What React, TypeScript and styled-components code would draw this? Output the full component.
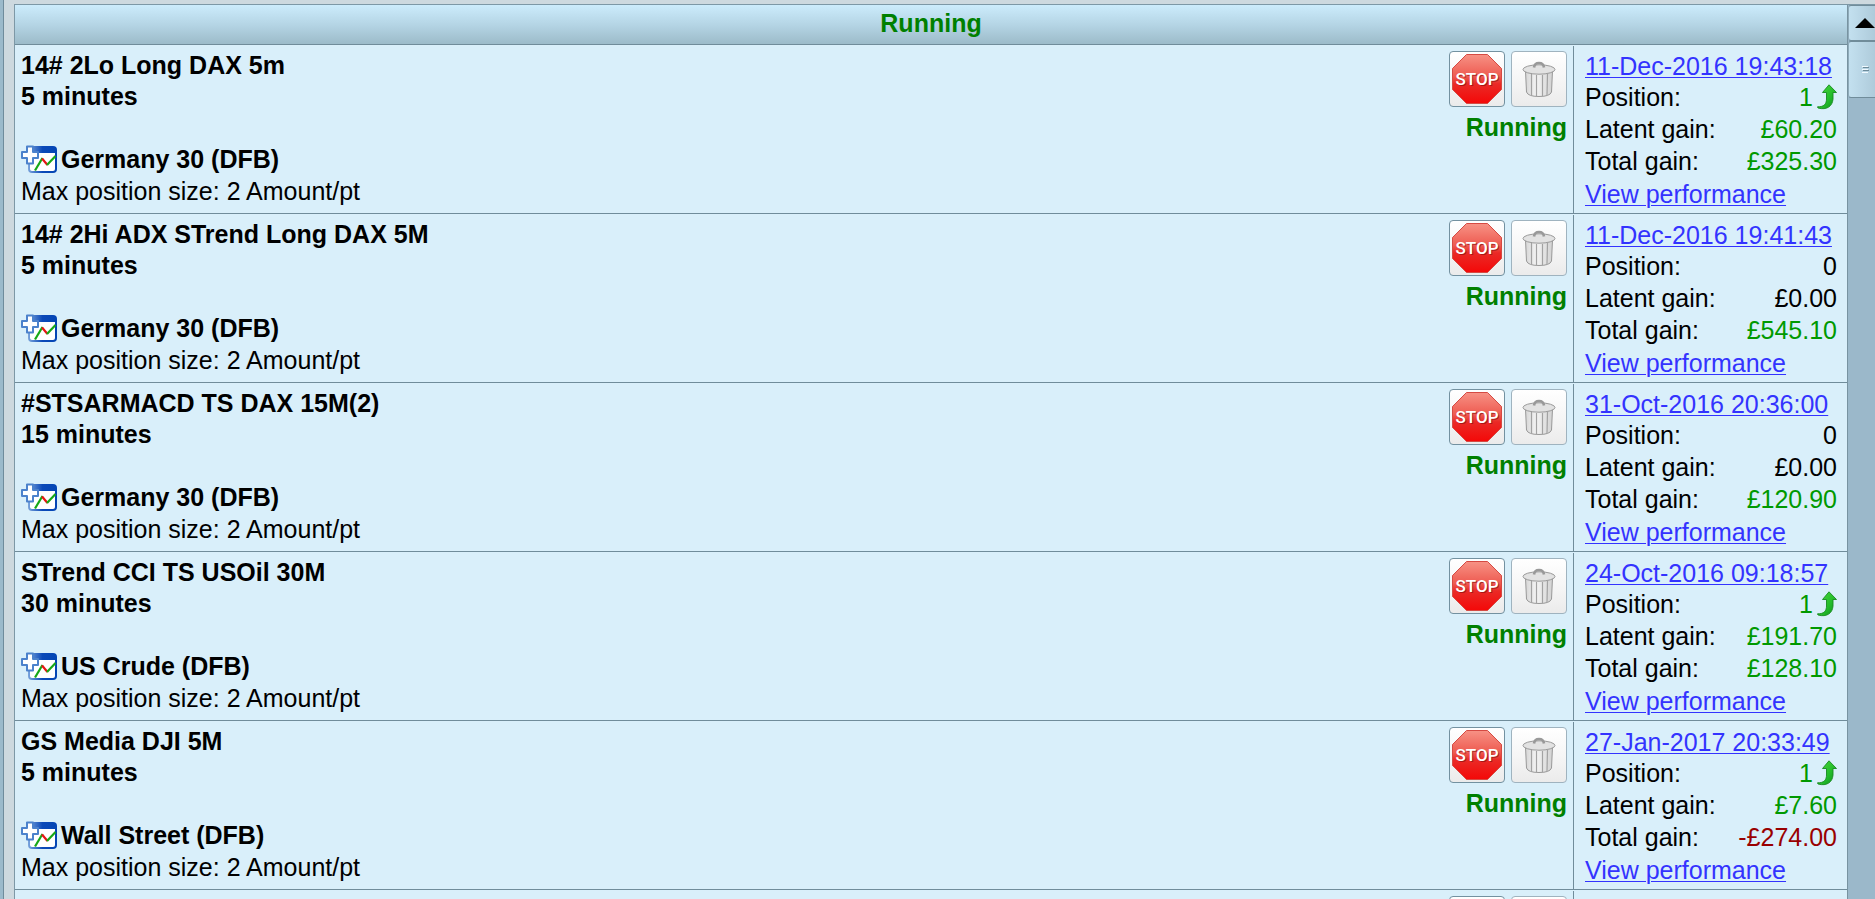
import React from "react";
import styled, { createGlobalStyle } from "styled-components";

type Tone = "plain" | "gain" | "loss";

interface System {
  name: string;
  timeframe: string;
  market: string;
  started: string;
  position: number;
  latent: string;
  latentTone: Tone;
  total: string;
  totalTone: Tone;
}

const systems: System[] = [
  { name: "14# 2Lo Long DAX 5m", timeframe: "5 minutes", market: "Germany 30 (DFB)", started: "11-Dec-2016 19:43:18", position: 1, latent: "£60.20", latentTone: "gain", total: "£325.30", totalTone: "gain" },
  { name: "14# 2Hi ADX STrend Long DAX 5M", timeframe: "5 minutes", market: "Germany 30 (DFB)", started: "11-Dec-2016 19:41:43", position: 0, latent: "£0.00", latentTone: "plain", total: "£545.10", totalTone: "gain" },
  { name: "#STSARMACD TS DAX 15M(2)", timeframe: "15 minutes", market: "Germany 30 (DFB)", started: "31-Oct-2016 20:36:00", position: 0, latent: "£0.00", latentTone: "plain", total: "£120.90", totalTone: "gain" },
  { name: "STrend CCI TS USOil 30M", timeframe: "30 minutes", market: "US Crude (DFB)", started: "24-Oct-2016 09:18:57", position: 1, latent: "£191.70", latentTone: "gain", total: "£128.10", totalTone: "gain" },
  { name: "GS Media DJI 5M", timeframe: "5 minutes", market: "Wall Street (DFB)", started: "27-Jan-2017 20:33:49", position: 1, latent: "£7.60", latentTone: "gain", total: "-£274.00", totalTone: "loss" },
];

const toneColor: Record<Tone, string> = { plain: "#000000", gain: "#009900", loss: "#990000" };

const GlobalStyle = createGlobalStyle`
  * { box-sizing: border-box; }
  body {
    margin: 0;
    overflow: hidden;
    background: #cdd9df;
    color: #000;
    font-family: "Liberation Sans", Arial, sans-serif;
    font-size: 25px;
    line-height: 32px;
  }
`;

const Window = styled.div`
  display: flex;
  height: 100vh;
  overflow: hidden;
`;

const WindowEdge = styled.div`
  flex: none;
  width: 4px;
  background: #9bbacb;
  border-right: 1px solid #6f8c9c;
`;

const Panel = styled.main`
  flex: 1;
  min-width: 0;
  margin: 4px 0 0 10px;
  border-top: 1px solid #7d98a6;
  border-left: 1px solid #7d98a6;
  background: #d9effa;
`;

const SystemTable = styled.table`
  width: 100%;
  border-collapse: separate;
  border-spacing: 0;
`;

const StatusHeading = styled.th`
  height: 40px;
  padding: 0 0 4px;
  border-bottom: 1px solid #708c9a;
  background: linear-gradient(#ccecfc, #b5d5e5 50%, #9cbbc9);
  color: #008000;
  font-weight: bold;
`;

const Cell = styled.td<{ $narrow?: boolean }>`
  height: 169px;
  padding: 0;
  vertical-align: top;
  border-bottom: 1px solid #708c9a;
  ${(p) => (p.$narrow ? "width: 274px;" : "")}
`;

const Strategy = styled.div`
  display: flex;
  justify-content: space-between;
  padding: 5px 6px 0;
`;

const Summary = styled.div`
  display: flex;
  flex-direction: column;
  gap: 31px;
`;

const Title = styled.div`
  font-weight: bold;
  line-height: 31px;
`;

const Market = styled.div`
  display: flex;
  align-items: center;
  gap: 4px;
  font-weight: bold;
`;

const Controls = styled.div`
  display: flex;
  flex-direction: column;
  align-items: flex-end;
  gap: 4px;
  padding-top: 1px;
`;

const ButtonRow = styled.div`
  display: flex;
  gap: 6px;
`;

const IconButton = styled.button<{ $muted?: boolean }>`
  display: flex;
  align-items: center;
  justify-content: center;
  width: 56px;
  height: 56px;
  padding: 0;
  border: 1px solid ${(p) => (p.$muted ? "#9fb3bf" : "#7391a0")};
  border-radius: 4px;
  background: linear-gradient(#ffffff, #f4f4f4 60%, #ebebeb);
`;

const RunState = styled.div`
  color: #008000;
  font-weight: bold;
`;

const Results = styled.div`
  height: 167px;
  margin-top: 1px;
  padding: 5px 10px 0 11px;
  border-left: 1px solid #708c9a;
`;

const Line = styled.div`
  display: flex;
  justify-content: space-between;
  white-space: nowrap;
`;

const LinkLine = styled(Line)`
  line-height: 30px;
  &:last-child { line-height: 34px; }
`;

const Link = styled.a`
  color: #3333ff;
  text-decoration: underline;
  text-decoration-thickness: 1px;
  text-underline-offset: 2px;
`;

const Amount = styled.span<{ $tone: Tone }>`
  display: flex;
  align-items: center;
  gap: 4px;
  color: ${(p) => toneColor[p.$tone]};
`;

const ScrollTrack = styled.div`
  flex: none;
  width: 28px;
  margin-top: 4px;
  overflow: hidden;
  border-left: 1px solid #7893a1;
  border-top: 1px solid #7d98a6;
  background: #9bb8ca;
`;

const ScrollPart = styled.button<{ $tall?: boolean }>`
  display: flex;
  align-items: center;
  justify-content: center;
  width: 34px;
  height: ${(p) => (p.$tall ? "57px" : "36px")};
  padding: 0;
  border: 1px solid #708c9a;
  border-left-color: #8fabba;
  border-radius: 3px;
  background: linear-gradient(90deg, #c3e0ef, #a9c6d6);
`;

const StopIcon = () => (
  <svg width="52" height="52" viewBox="0 0 52 52" aria-hidden="true">
    <defs>
      <linearGradient id="stopFill" x1="0" y1="0" x2="0" y2="1">
        <stop offset="0" stopColor="#f79285" />
        <stop offset="0.45" stopColor="#ee5a50" />
        <stop offset="0.6" stopColor="#ea2a26" />
        <stop offset="1" stopColor="#f40808" />
      </linearGradient>
    </defs>
    <path d="M15.500 1.500H36.500L50.500 15.500V36.500L36.500 50.500H15.500L1.500 36.500V15.500Z" fill="url(#stopFill)" stroke="#d54a43" />
    <text x="27" y="33" textAnchor="middle" fontFamily="Roboto, sans-serif" fontWeight="500" fontSize="17" fill="#8e1010" opacity="0.7">STOP</text>
    <text x="26" y="32" textAnchor="middle" fontFamily="Roboto, sans-serif" fontWeight="500" fontSize="17" fill="#fff">STOP</text>
  </svg>
);

const TrashIcon = () => (
  <svg width="34" height="38" viewBox="0 0 34 38" aria-hidden="true">
    <defs>
      <linearGradient id="binFill">
        <stop offset="0" stopColor="#d6d6d6" />
        <stop offset="0.4" stopColor="#f4f4f4" />
        <stop offset="1" stopColor="#d2d2d2" />
      </linearGradient>
    </defs>
    <path d="M3.500 11L4.500 32Q6 36.500 17 36.500T29.500 32L30.500 11Z" fill="url(#binFill)" stroke="#999" />
    <path d="M9.500 14V35M14.500 15V36M20.500 15V36M25.500 14L25 35" stroke="#a2a2a2" strokeWidth="1.200" fill="none" />
    <ellipse cx="17" cy="9.500" rx="16" ry="4.700" fill="#e2e2e2" stroke="#999" />
    <path d="M12 7.500Q12.500 3 17 3T22 7.500" fill="none" stroke="#999" strokeWidth="2.600" />
  </svg>
);

const ChartIcon = () => (
  <svg width="36" height="28" viewBox="0 0 36 28" aria-hidden="true">
    <defs>
      <linearGradient id="frameFill">
        <stop offset="0" stopColor="#7ba5dc" />
        <stop offset="0.5" stopColor="#0b49b8" />
        <stop offset="1" stopColor="#0345b4" />
      </linearGradient>
    </defs>
    <rect x="7" y="1" width="29" height="27" rx="4" fill="url(#frameFill)" />
    <path d="M9 8H34V24Q34 26 32 26H11Q9 26 9 24Z" fill="#fff" />
    <path d="M14 25.500L21.500 13" stroke="#17a817" strokeWidth="2.200" fill="none" />
    <path d="M21 13.500L26.500 20" stroke="#e81515" strokeWidth="2.200" fill="none" />
    <path d="M26 20L34.500 11" stroke="#17a817" strokeWidth="2.200" fill="none" />
    <path d="M6 1.500H12V7H17V13H12V18.500H6V13H1V7H6Z" fill="#fff" stroke="#4c82cc" strokeWidth="2" strokeLinejoin="round" />
  </svg>
);

const ArrowIcon = () => (
  <svg width="20" height="26" viewBox="0 0 20 26" aria-hidden="true">
    <defs>
      <linearGradient id="arrowFill" x1="0" y1="0" x2="1" y2="1">
        <stop offset="0" stopColor="#4fdc3c" />
        <stop offset="0.6" stopColor="#22bb2a" />
        <stop offset="1" stopColor="#0d8a1c" />
      </linearGradient>
    </defs>
    <path d="M12 0.800L19.500 8.500H16V15C15.500 22 10 26.500 1 24L0.500 22.800C7 23 9.500 20 9.500 15V8.500H5.500Z" fill="url(#arrowFill)" stroke="#178a20" strokeWidth="0.900" strokeLinejoin="round" />
  </svg>
);

const SystemRow = ({ system }: { system: System }) => (
  <tr>
    <Cell>
      <Strategy>
        <Summary>
          <Title>{system.name}<br />{system.timeframe}</Title>
          <div>
            <Market><ChartIcon />{system.market}</Market>
            <div>Max position size: 2 Amount/pt</div>
          </div>
        </Summary>
        <Controls>
          <ButtonRow>
            <IconButton type="button" aria-label="Stop"><StopIcon /></IconButton>
            <IconButton type="button" aria-label="Delete" $muted><TrashIcon /></IconButton>
          </ButtonRow>
          <RunState>Running</RunState>
        </Controls>
      </Strategy>
    </Cell>
    <Cell $narrow>
      <Results>
        <LinkLine><Link href="#started">{system.started}</Link></LinkLine>
        <Line>
          <span>Position:</span>
          <Amount $tone={system.position ? "gain" : "plain"}>{system.position}{system.position > 0 && <ArrowIcon />}</Amount>
        </Line>
        <Line><span>Latent gain:</span><Amount $tone={system.latentTone}>{system.latent}</Amount></Line>
        <Line><span>Total gain:</span><Amount $tone={system.totalTone}>{system.total}</Amount></Line>
        <LinkLine><Link href="#performance">View performance</Link></LinkLine>
      </Results>
    </Cell>
  </tr>
);

export default function App() {
  return (
    <>
      <GlobalStyle />
      <Window>
        <WindowEdge />
        <Panel>
          <SystemTable>
            <thead>
              <tr><StatusHeading colSpan={2}>Running</StatusHeading></tr>
            </thead>
            <tbody>
              {systems.map((s) => <SystemRow key={s.name} system={s} />)}
              <tr>
                <Cell>
                  <Strategy>
                    <Summary />
                    <Controls>
                      <ButtonRow>
                        <IconButton type="button" aria-label="Stop" />
                        <IconButton type="button" aria-label="Delete" $muted />
                      </ButtonRow>
                    </Controls>
                  </Strategy>
                </Cell>
                <Cell $narrow><Results /></Cell>
              </tr>
            </tbody>
          </SystemTable>
        </Panel>
        <ScrollTrack>
          <ScrollPart type="button" aria-label="Scroll up">
            <svg width="20" height="10" viewBox="0 0 20 10" aria-hidden="true"><path d="M0 10L10 0L20 10Z" fill="#000" /></svg>
          </ScrollPart>
          <ScrollPart type="button" aria-label="Scroll position" $tall>
            <svg width="7" height="7" viewBox="0 0 7 7" aria-hidden="true">
              <path d="M0 0.500H6M0 3.500H6" stroke="#f0f9ff" />
              <path d="M1 1.500H7M1 4.500H7" stroke="#6d8b9a" />
              <path d="M0 6.500H6" stroke="#f0f9ff" />
            </svg>
          </ScrollPart>
        </ScrollTrack>
      </Window>
    </>
  );
}
